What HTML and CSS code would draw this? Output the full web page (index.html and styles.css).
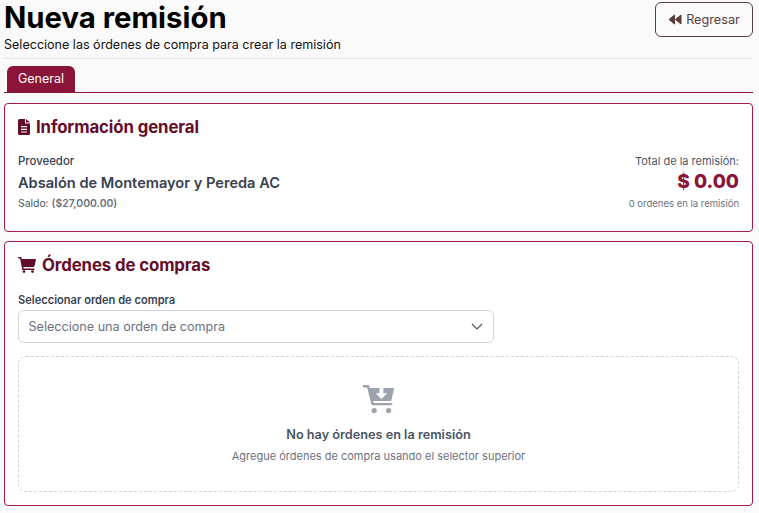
FILE: index.html
```html
<!DOCTYPE html>
<html lang="es">
<head>
<meta charset="utf-8">
<title>Nueva remisión</title>
<link rel="stylesheet" href="styles.css">
</head>
<body>
<header class="page-head">
  <div>
    <h1>Nueva remisión</h1>
    <p class="subtitle">Seleccione las órdenes de compra para crear la remisión</p>
  </div>
  <button class="back" type="button">
    <svg class="back-icon" viewBox="0 0 14 11" aria-hidden="true"><path d="M6.500 1v9L1 5.500zM13 1v9L7.400 5.500z" stroke="#5a3d3d" stroke-width="1" stroke-linejoin="round"/></svg>
    Regresar
  </button>
</header>
<nav class="tabs"><span class="tab">General</span></nav>
<section class="card info">
  <h2><svg class="doc-icon" viewBox="0 0 12 16" aria-hidden="true"><path fill-rule="evenodd" d="M1.500 0H7v4.500h5v10A1.500 1.500 0 0 1 10.500 16h-9A1.500 1.500 0 0 1 0 14.500v-13A1.500 1.500 0 0 1 1.500 0zM8 0l4 3.500H8zM3 7v1.200h6V7zm0 2.700v1.200h6V9.700zM3 12.400v1.200h6v-1.200z"/></svg>Información general</h2>
  <div class="info-row">
    <div>
      <div class="label">Proveedor</div>
      <div class="supplier">Absalón de Montemayor y Pereda AC</div>
      <div class="balance">Saldo: <b>($27,000.00)</b></div>
    </div>
    <div class="totals">
      <div class="total-label">Total de la remisión:</div>
      <div class="total">$ 0.00</div>
      <div class="count">0 ordenes en la remisión</div>
    </div>
  </div>
</section>
<section class="card orders">
  <h2><svg class="cart-icon" viewBox="0 0 18 16" aria-hidden="true"><path d="M0 .8C0 .4.300 0 .8 0h1.600c.6 0 1.100.4 1.200 1L3.800 2h13.300c.6 0 1 .5.900 1.100l-1.500 6c-.1.500-.500.800-1 .800H5.300l.3 1.500h10.200a.8.800 0 0 1 0 1.600H5a.8.800 0 0 1-.8-.6L2.100 1.600H.8A.8.800 0 0 1 0 .8z"/><circle cx="6" cy="14.600" r="1.400"/><circle cx="14.500" cy="14.600" r="1.400"/></svg>Órdenes de compras</h2>
  <label class="select-label">Seleccionar orden de compra</label>
  <div class="select">
    <span>Seleccione una orden de compra</span>
    <svg class="chevron" viewBox="0 0 12 7" aria-hidden="true"><path d="M1 1l5 5 5-5" fill="none" stroke="#4b5563" stroke-width="1.200"/></svg>
  </div>
  <div class="empty">
    <svg class="empty-icon" viewBox="0 0 32 30" aria-hidden="true"><path fill-rule="evenodd" d="M1 0h4c.8 0 1.400.5 1.600 1.200L7 3h24c.7 0 1.200.7 1 1.400l-2.600 11c-.2.700-.8 1.100-1.500 1.100H10.600l.4 2h18.500a1.300 1.300 0 0 1 0 2.500H10c-.6 0-1.200-.4-1.300-1L4.300 2.500H1A1.250 1.250 0 0 1 1 0zM17 3v5.500h-4l6 6 6-6h-4V3z"/><circle cx="11.500" cy="26.500" r="2.700"/><circle cx="26.500" cy="26.500" r="2.700"/></svg>
    <div class="empty-title">No hay órdenes en la remisión</div>
    <div class="empty-text">Agregue órdenes de compra usando el selector superior</div>
  </div>
</section>
</body>
</html>
```
FILE: styles.css
```css
* { box-sizing: border-box; }
html, body { margin: 0; }
body {
  background: #fafafa;
  padding: 0 6px 0 4px;
  font-family: Inter, "Liberation Sans", sans-serif;
  color: #111;
  height: 513px;
  overflow: hidden;
}
.page-head {
  display: flex;
  justify-content: space-between;
  align-items: flex-start;
  height: 59px;
  border-bottom: 1px solid #e5e5e5;
  padding-top: 2px;
}
h1 {
  margin: 0;
  font-size: 29.300px;
  line-height: 32px;
  font-weight: 700;
  color: #000;
}
.subtitle {
  margin: 3px 0 0;
  font-size: 12.550px;
  line-height: 16px;
  color: #111;
}
.back {
  width: 98px;
  height: 35px;
  display: flex;
  align-items: center;
  justify-content: center;
  gap: 4px;
  background: transparent;
  border: 1px solid #5a3d3d;
  border-radius: 6px;
  font: 12.700px Inter, sans-serif;
  color: #5a3d3d;
}
.back-icon { width: 14px; height: 11px; fill: #5a3d3d; }
.tabs {
  margin-top: 7px;
  height: 27px;
  padding-left: 3px;
  border-bottom: 1px solid #8b1538;
  display: flex;
}
.tab {
  width: 68px;
  height: 26px;
  background: #8b1538;
  color: #fff;
  border-radius: 6px 6px 0 0;
  font-size: 12.500px;
  line-height: 26px;
  text-align: center;
}
.card {
  background: #fff;
  border: 1px solid #a51c42;
  border-radius: 4px;
  padding: 0 13px;
}
.info { margin-top: 10px; height: 129px; }
.orders { margin-top: 9px; height: 265px; }
h2 {
  margin: 0;
  display: flex;
  align-items: center;
  font-size: 16.800px;
  font-weight: 700;
  letter-spacing: -0.1px;
  color: #640d28;
  line-height: 20px;
}
.info h2 { margin-top: 13px; gap: 6px; }
.orders h2 { margin-top: 13px; gap: 6px; }
.doc-icon { width: 12px; height: 16px; fill: #640d28; }
.cart-icon { width: 18px; height: 16px; fill: #640d28; }
.info-row {
  display: flex;
  justify-content: space-between;
  margin-top: 16px;
}
.label {
  font-size: 11.400px;
  font-weight: 500;
  line-height: 16px;
  color: #374151;
}
.supplier {
  margin-top: 5px;
  font-size: 14.600px;
  font-weight: 600;
  line-height: 18px;
  color: #374151;
}
.balance {
  margin-top: 5px;
  font-size: 10.400px;
  line-height: 14px;
  color: #4b5563;
}
.balance b { font-weight: 600; color: #6b7280; }
.totals { text-align: right; }
.total-label { font-size: 11px; line-height: 16px; color: #4b5563; }
.total {
  margin-top: 1px;
  font-size: 19px;
  font-weight: 800;
  line-height: 24px;
  color: #8b1538;
}
.count { margin-top: 3px; font-size: 9.500px; line-height: 14px; color: #6b7280; }
.select-label {
  display: block;
  margin-top: 18px;
  font-size: 11.100px;
  font-weight: 600;
  line-height: 14px;
  color: #374151;
}
.select {
  margin-top: 3px;
  width: 476px;
  height: 33px;
  display: flex;
  align-items: center;
  justify-content: space-between;
  padding: 0 10px 0 9.500px;
  border: 1px solid #d1d5db;
  border-radius: 6px;
  font-size: 12.600px;
  color: #6b7280;
}
.chevron { width: 12px; height: 7px; }
.empty {
  margin-top: 13px;
  height: 136px;
  border: 1px dashed #d1d5db;
  border-radius: 8px;
  display: flex;
  flex-direction: column;
  align-items: center;
  padding-top: 28px;
}
.empty-icon { width: 33px; height: 29px; fill: #9ca3af; }
.empty-title {
  margin-top: 13px;
  font-size: 12.700px;
  font-weight: 600;
  line-height: 16px;
  color: #4b5563;
}
.empty-text {
  margin-top: 5px;
  font-size: 11px;
  line-height: 16px;
  color: #6b7280;
}
```
